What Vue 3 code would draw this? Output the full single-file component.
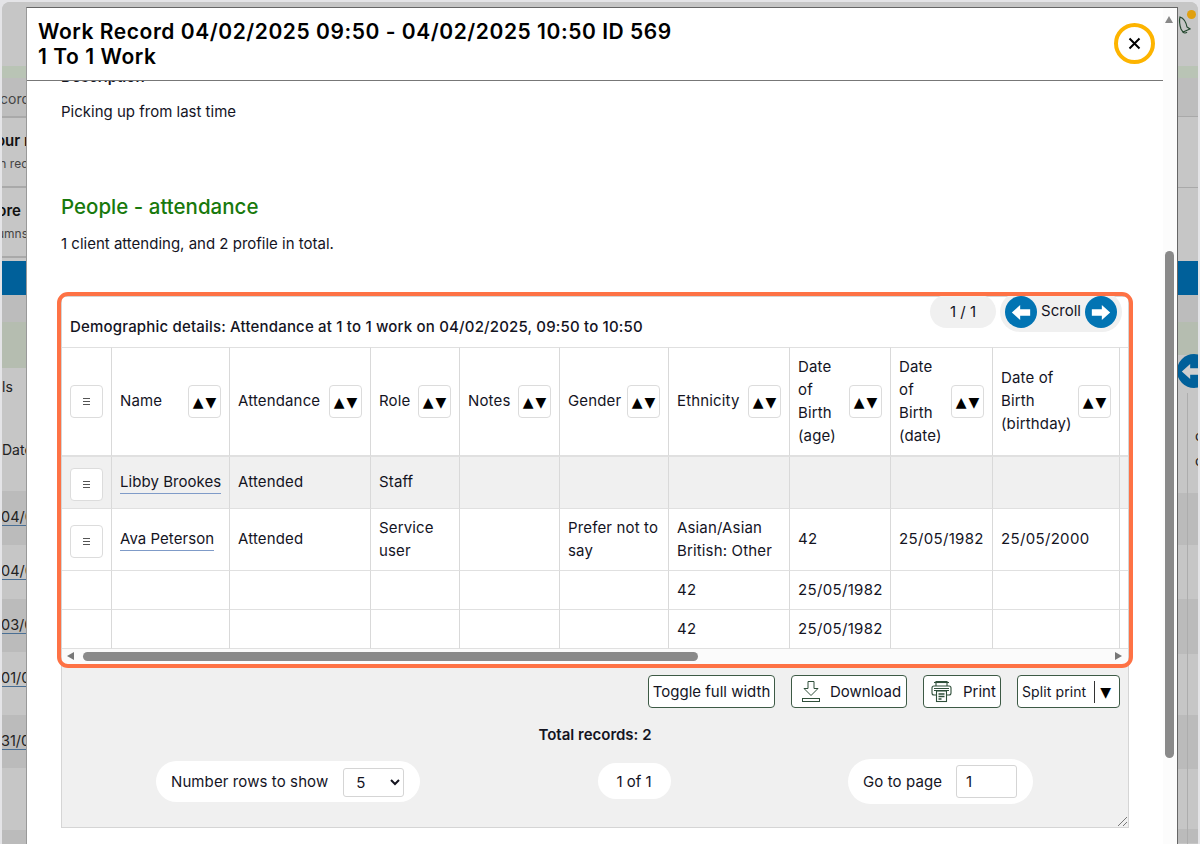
<script setup>
const leftBands = [
  { h: 64, c: '#c6c6c6' }, { h: 12, c: '#b9c4b5' }, { h: 38, c: '#bdbdbd', t: 'cord', cls: 'x-right', tr: -2 },
  { h: 2, c: '#a9a9a9' }, { h: 68, c: '#c6c6c6', t: 'our r', s: 'h rec', cls: 'x-right', tr: -2, sr: 0 }, { h: 2, c: '#a9a9a9' },
  { h: 68, c: '#c6c6c6', t: 'ore', s: 'umns', cls: 'x-right', tr: 7, sr: 0 }, { h: 2, c: '#a9a9a9' }, { h: 3, c: '#c6c6c6' },
  { h: 34, c: '#00609a' }, { h: 27, c: '#bcbcbc' }, { h: 46, c: '#b5bdb0' }, { h: 39, c: '#c6c6c6', t: 'ls', cls: 'x-thin' },
  { h: 84, c: '#c6c6c6', t: 'Date', cls: 'x-thin x-date' },
  { h: 54, c: '#bbbbbb', l: '04/0' }, { h: 54, c: '#c6c6c6', l: '04/0' }, { h: 53, c: '#bbbbbb', l: '03/0' },
  { h: 63, c: '#c6c6c6', l: '01/0' }, { h: 53, c: '#bbbbbb', l: '31/0' }, { h: 62, c: '#c6c6c6' }, { h: 14, c: '#bbbbbb' }
]
const rightBands = [
  { h: 64, c: '#c6c6c6' }, { h: 12, c: '#b9c4b5' }, { h: 38, c: '#bdbdbd' }, { h: 1, c: '#a9a9a9' }, { h: 70, c: '#c6c6c6' },
  { h: 1, c: '#a9a9a9' }, { h: 73, c: '#c6c6c6' }, { h: 34, c: '#00609a' }, { h: 27, c: '#bcbcbc' }, { h: 33, c: '#b5bdb0' },
  { h: 38, c: '#c6c6c6' }, { h: 100, c: '#c6c6c6' }, { h: 52, c: '#bbbbbb' }, { h: 54, c: '#c6c6c6' }, { h: 55, c: '#bbbbbb' },
  { h: 61, c: '#c6c6c6' }, { h: 54, c: '#bbbbbb' }, { h: 60, c: '#c6c6c6' }, { h: 14, c: '#bbbbbb' }
]
const widths = [50, 118, 141, 89, 100, 109, 121, 101, 102, 127, 40]
const heads = ['Name', 'Attendance', 'Role', 'Notes', 'Gender', 'Ethnicity', 'Date of Birth (age)', 'Date of Birth (date)', 'Date of Birth (birthday)']
const rows = [
  { cls: 'r1', menu: true, cells: ['Libby Brookes', 'Attended', 'Staff', '', '', '', '', '', ''], link: true },
  { cls: 'r2', menu: true, cells: ['Ava Peterson', 'Attended', 'Service user', '', 'Prefer not to say', 'Asian/Asian British: Other', '42', '25/05/1982', '25/05/2000'], link: true },
  { cls: 'r3', cells: ['', '', '', '', '', '42', '25/05/1982', '', ''] },
  { cls: 'r3', cells: ['', '', '', '', '', '42', '25/05/1982', '', ''] }
]
const isDate = (c) => /^[\d/]+$/.test(c)
</script>

<template>
  <div class="page">
    <div class="backdrop">
      <div class="strip left">
        <div v-for="(b, i) in leftBands" :key="i" class="band" :class="b.cls" :style="{ height: b.h + 'px', background: b.c }">
          <span v-if="b.t" class="bt" :class="{ strong: b.s }" :style="b.tr !== undefined ? { right: b.tr + 'px' } : null">{{ b.t }}</span>
          <span v-if="b.s" class="bs" :style="{ right: b.sr + 'px' }">{{ b.s }}</span>
          <span v-if="b.l" class="bl">{{ b.l }}</span>
        </div>
      </div>
      <div class="strip right">
        <div v-for="(b, i) in rightBands" :key="i" class="band" :style="{ height: b.h + 'px', background: b.c }"></div>
        <svg class="bell" width="14" height="18" viewBox="0 0 14 18" fill="none" stroke="#24472e" stroke-width="1.2">
          <path d="M2 1c3 1 6 5 7 10l3 2-7 3-2-3C2 10 1 5 2 1z" />
          <path d="M5 16c1 1.300 3 1.300 4 0" />
        </svg>
        <span class="dot"></span>
        <span class="vline"></span>
        <span class="back-arrow">
          <svg width="20" height="17" viewBox="0 0 24 20"><path d="M1 10 11 1v5h12v8H11v5z" fill="#cfcfcf" /></svg>
        </span>
        <span class="back-c c1">c</span>
        <span class="back-c c2">c</span>
      </div>
    </div>

    <div class="modal">
      <div class="main">
        <header class="head">
          <h1 class="title">Work Record 04/02/2025 09:50 - 04/02/2025 10:50 ID 569<br />1 To 1 Work</h1>
          <button class="close" aria-label="Close">
            <svg width="13" height="13" viewBox="0 0 13 13"><path d="M1.500 1.500l10 10M11.500 1.500l-10 10" stroke="#000" stroke-width="2" fill="none" /></svg>
          </button>
        </header>
        <div class="body">
          <p class="desc-label">Description</p>
          <p class="desc">Picking up from last time</p>
          <h2 class="section">People - attendance</h2>
          <p class="count">1 client attending, and 2 profile in total.</p>

          <div class="grid-box">
            <div class="top-bar">
              <div class="caption">Demographic details: Attendance at 1 to 1 work on 04/02/2025, 09:50 to 10:50</div>
              <div class="pager">1 / 1</div>
              <div class="scroller">
                <span class="round">
                  <svg width="20" height="17" viewBox="0 0 24 20"><path d="M1 10 11 1v5h12v8H11v5z" fill="#fff" /></svg>
                </span>
                <span class="scroll-label">Scroll</span>
                <span class="round">
                  <svg width="20" height="17" viewBox="0 0 24 20"><path d="M23 10 13 1v5H1v8h12v5z" fill="#fff" /></svg>
                </span>
              </div>
            </div>

            <div class="table-clip">
              <table class="tbl">
                <colgroup><col v-for="(w, i) in widths" :key="i" :style="{ width: w + 'px' }" /></colgroup>
                <thead>
                  <tr>
                    <th>
                      <button class="menu-btn">
                        <svg width="9" height="9" viewBox="0 0 9 9"><path d="M1 1.500h7M1 4.500h7M1 7.500h7" stroke="#555" stroke-width="1" /></svg>
                      </button>
                    </th>
                    <th v-for="h in heads" :key="h">
                      <div class="th-in">
                        <span class="th-text">{{ h }}</span>
                        <button class="sort-btn"><span>▲</span><span>▼</span></button>
                      </div>
                    </th>
                    <th></th>
                  </tr>
                </thead>
                <tbody>
                  <tr v-for="(r, ri) in rows" :key="ri" :class="r.cls">
                    <td class="menu-cell">
                      <button v-if="r.menu" class="menu-btn">
                        <svg width="9" height="9" viewBox="0 0 9 9"><path d="M1 1.500h7M1 4.500h7M1 7.500h7" stroke="#555" stroke-width="1" /></svg>
                      </button>
                    </td>
                    <td v-for="(c, ci) in r.cells" :key="ci" :class="{ num: isDate(c) }">
                      <a v-if="r.link && ci === 0" class="name-link">{{ c }}</a>
                      <template v-else>{{ c }}</template>
                    </td>
                    <td></td>
                  </tr>
                </tbody>
              </table>
            </div>

            <div class="hscroll">
              <span class="tri tri-l"></span>
              <span class="thumb"></span>
              <span class="tri tri-r"></span>
            </div>

            <div class="tools">
              <button class="tool t-toggle">Toggle full width</button>
              <button class="tool t-dl">
                <svg width="20" height="23" viewBox="0 0 20 23" fill="none" stroke="#2f4f3a" stroke-width="1">
                  <path d="M7 1.500h6v7h4l-7 7-7-7h4z" />
                  <rect x="1.500" y="18.500" width="17" height="3" />
                </svg>
                <span>Download</span>
              </button>
              <button class="tool t-print">
                <svg width="21" height="23" viewBox="0 0 21 23" fill="none" stroke="#2f4f3a" stroke-width="1.100">
                  <path d="M5 6V1.500h11V6" />
                  <path d="M3 2.500h15" />
                  <rect x="1" y="6" width="19" height="9" rx="2" />
                  <path d="M3 8.500h15M3 10.500h15" />
                  <rect x="5.500" y="11" width="10" height="10.500" fill="#fff" />
                  <path d="M7.500 14h6M7.500 16.500h6M7.500 19h3" stroke-width="1.500" />
                </svg>
                <span>Print</span>
              </button>
              <button class="tool t-split">
                <span class="split-text">Split print</span>
                <i class="divider"></i>
                <span class="caret">▼</span>
              </button>
            </div>

            <div class="total">Total records: 2</div>

            <div class="pills">
              <div class="pill p-rows">
                <span class="pl">Number rows to show</span>
                <select class="sel"><option>5</option></select>
              </div>
              <div class="pill p-of">1 of 1</div>
              <div class="pill p-go">
                <span class="pl">Go to page</span>
                <input class="goto" value="1" />
              </div>
            </div>

            <svg class="grip" width="11" height="11" viewBox="0 0 11 11" stroke="#777" stroke-width="1"><path d="M1 10 10 1M6 10l4-4" /></svg>
            <div class="hl"></div>
          </div>
        </div>
      </div>
      <div class="vscroll">
        <span class="up"></span>
        <span class="vthumb"></span>
      </div>
    </div>
  </div>
</template>

<style>
html, body { margin: 0; padding: 0; }
</style>

<style scoped>
* { box-sizing: border-box; }
.page {
  position: relative;
  width: 1200px;
  height: 844px;
  overflow: hidden;
  background: #e4e4e7;
  font-family: Inter, "Liberation Sans", sans-serif;
  font-size: 15px;
  color: #14141f;
}
.backdrop {
  display: flex;
  justify-content: space-between;
  margin: 2px 2px 0 2px;
  height: 842px;
  border-radius: 8px 8px 0 0;
  overflow: hidden;
  background: #c6c6c6;
}
.strip { display: flex; flex-direction: column; overflow: hidden; position: relative; }
.left { width: 26px; }
.right { width: 29px; }
.band { flex: none; position: relative; overflow: hidden; white-space: nowrap; }
.bt, .bs, .bl { position: absolute; color: #222; }
.x-right .bt { top: 12px; font-size: 14px; color: #444; }
.x-right .bt.strong { top: 13px; font-weight: 600; font-size: 15px; color: #111; }
.x-right .bs { top: 38px; font-size: 12px; color: #444; }
.x-thin .bt { left: 0; top: 10px; font-size: 14px; }
.x-date .bt { top: 34px; }
.bl { left: -1px; top: 17px; font-size: 14.500px; border-bottom: 1px solid #4a6f94; }
.bell { position: absolute; left: 9px; top: 14px; }
.dot { position: absolute; right: 2px; top: 8px; width: 9px; height: 9px; border-radius: 50%; background: #e0a010; }
.vline { position: absolute; left: 18px; top: 391px; bottom: 0; width: 1px; background: #adadad; }
.back-arrow {
  position: absolute; left: 8px; top: 352px; width: 34px; height: 34px; border-radius: 50%;
  background: #00609a; display: flex; align-items: center; padding-left: 4px;
}
.back-c { position: absolute; left: 26px; font-size: 14px; color: #222; }
.c1 { top: 425px; }
.c2 { top: 450px; }

.modal {
  position: absolute;
  left: 26px;
  top: 7px;
  width: 1152px;
  height: 837px;
  display: flex;
  background: #fff;
  border: 1px solid #666;
  border-left-color: #999;
  border-bottom: none;
}
.main { width: 1136px; overflow: hidden; display: flex; flex-direction: column; }
.head {
  position: relative;
  z-index: 2;
  flex: none;
  height: 73px;
  background: #fff;
  border-bottom: 1px solid #777;
  padding: 11px 11px 0;
  display: flex;
  justify-content: space-between;
}
.title { margin: 0; font-size: 21px; line-height: 25px; font-weight: 600; color: #000; letter-spacing: .55px; }
.close {
  margin: 4px -3px 0 0;
  width: 41px;
  height: 41px;
  border-radius: 50%;
  border: 4px solid #fdb400;
  background: #fff;
  padding: 0;
  display: flex;
  align-items: center;
  justify-content: center;
}
.body { margin-top: -16px; padding-left: 34px; flex: none; }
.body p { margin: 0; line-height: 23px; }
.desc-label { font-weight: 600; }
.desc { margin-top: 12px !important; }
.section { margin: 70px 0 0; font-size: 20.500px; line-height: 28px; font-weight: 500; color: #18790c; }
.count { margin-top: 11px !important; }

.grid-box {
  position: relative;
  margin-top: 41px;
  width: 1068px;
  height: 532px;
  background: #f0f0f0;
  border: 1px solid #d5d5d5;
}
.top-bar { height: 50px; background: #fff; display: flex; align-items: flex-start; padding: 0 6px 0 8px; }
.caption { margin-top: 21px; flex: 1; font-size: 15px; line-height: 18px; font-weight: 500; white-space: nowrap; letter-spacing: .18px; }
.pager {
  margin-top: -2px; width: 66px; height: 33px; border-radius: 17px; background: #f0f0f0;
  display: flex; align-items: center; justify-content: center; flex: none;
}
.scroller {
  margin: -5px 0 0 4px; width: 122px; height: 40px; border-radius: 20px; background: #f0f0f0;
  display: flex; align-items: center; justify-content: space-between; padding: 0 5px; flex: none;
}
.scroll-label { margin-bottom: 3px; }
.round {
  width: 32px; height: 32px; border-radius: 50%; background: #0274b3;
  display: flex; align-items: center; justify-content: center;
}
.table-clip { width: 1066px; overflow: hidden; background: #fff; }
.tbl { table-layout: fixed; width: 1098px; border-collapse: separate; border-spacing: 0; letter-spacing: .15px; }
.tbl th, .tbl td {
  border-right: 1px solid #d9d9d9;
  border-bottom: 1px solid #e0e0e0;
  padding: 0 8px;
  font-weight: 400;
  text-align: left;
  line-height: 23px;
  vertical-align: middle;
}
.tbl th { height: 110px; border-top: 1px solid #e0e0e0; border-bottom-width: 2px; }
.tbl tbody td:nth-child(n+2) { padding-bottom: 2px; }
.tbl td.menu-cell { padding-top: 4px; }
.tbl td.num { letter-spacing: .33px; white-space: nowrap; }
.r1 td { height: 52px; background: #f0f0f0; }
.r2 td { height: 62px; }
.r3 td { height: 39px; }
.th-in { display: flex; align-items: center; justify-content: space-between; gap: 4px; }
.th-text { margin-bottom: 2px; }
.menu-btn, .sort-btn {
  width: 33px; height: 33px; border: 1px solid #dcdcdc; border-radius: 4px; background: #fff; padding: 0;
  display: flex; align-items: center; justify-content: center; flex: none;
}
.sort-btn { font-size: 14px; color: #000; gap: 2px; font-family: "DejaVu Sans", sans-serif; }
.name-link { border-bottom: 1px solid #7f9bc8; padding-bottom: 2px; white-space: nowrap; letter-spacing: .05px; }
.hscroll { height: 16px; background: #fbfbfb; position: relative; display: flex; align-items: center; }
.thumb { position: absolute; left: 21px; top: 3px; width: 615px; height: 9px; border-radius: 5px; background: #8a8a8a; }
.tri { position: absolute; top: 3px; width: 0; height: 0; border-top: 4.500px solid transparent; border-bottom: 4.500px solid transparent; }
.tri-l { left: 5px; border-right: 7px solid #777; }
.tri-r { right: 6px; border-left: 7px solid #777; }

.tools { margin-top: 10px; display: flex; justify-content: flex-end; gap: 16px; padding-right: 8px; }
.tool {
  height: 33px; border: 1px solid #3d5a45; border-radius: 4px; background: #fff; padding: 0 4px;
  font: inherit; color: inherit; display: flex; align-items: center; white-space: nowrap;
}
.t-toggle { width: 127px; justify-content: center; }
.t-dl { width: 116px; gap: 9px; padding-left: 9px; }
.t-print { width: 78px; gap: 11px; padding-left: 7px; }
.t-split { width: 103px; padding-left: 4px; }
.split-text { font-size: 14px; letter-spacing: .1px; }
.divider { width: 1px; height: 22px; background: #333; margin: 0 5px 0 8px; }
.caret { font-family: "DejaVu Sans", sans-serif; font-size: 14px; color: #000; }
.total { margin-top: 18px; text-align: center; font-weight: 600; line-height: 18px; font-size: 15px; }
.pills {
  position: absolute; left: 0; right: 0; top: 461px; height: 46px;
  display: flex; align-items: center; justify-content: space-between; padding: 0 95px 0 94px;
}
.pill { background: #fff; display: flex; align-items: center; border-radius: 23px; }
.pl { letter-spacing: .1px; }
.p-rows { width: 264px; height: 41px; padding-left: 15px; gap: 15px; }
.p-of { width: 73px; height: 36px; justify-content: center; }
.p-go { width: 185px; height: 45px; padding-left: 15px; gap: 14px; }
.sel {
  width: 61px; height: 29px; background: #fff; border: 1px solid #d5d5d5; border-radius: 3px;
  font: inherit; color: inherit; padding-left: 8px; margin-top: 2px;
}
.goto {
  width: 61px; height: 33px; border: 1px solid #d5d5d5; border-radius: 3px;
  font: inherit; color: inherit; padding-left: 9px; outline: none;
}
.grip { position: absolute; right: 0; bottom: 0; }
.hl {
  position: absolute; left: -5px; top: -5px; width: 1076px; height: 376px;
  border: 4px solid #fe7245; border-radius: 11px; pointer-events: none;
}

.vscroll { width: 14px; background: #fcfcfc; position: relative; }
.up {
  position: absolute; left: 2px; top: 8px; width: 0; height: 0;
  border-left: 4.500px solid transparent; border-right: 4.500px solid transparent; border-bottom: 7px solid #888;
}
.vthumb { position: absolute; left: 2px; top: 243px; width: 9px; height: 507px; border-radius: 5px; background: #8a8a8a; }
</style>
